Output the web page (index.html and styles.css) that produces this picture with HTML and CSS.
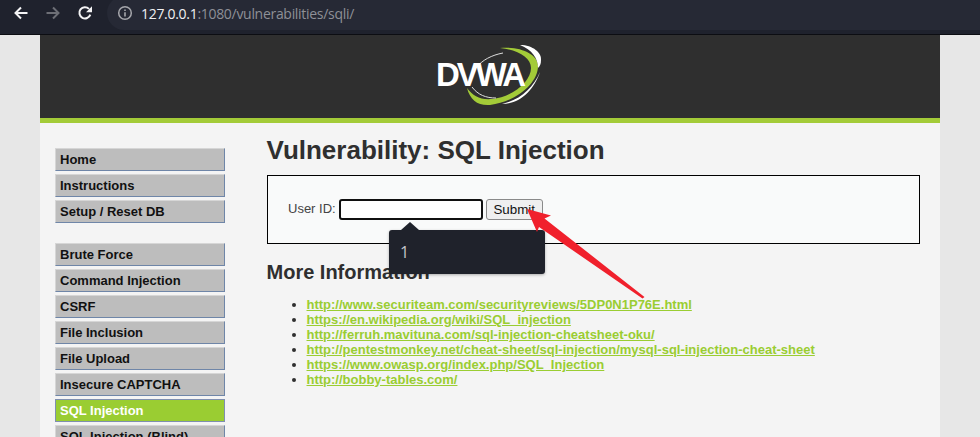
FILE: index.html
```html
<!DOCTYPE html>
<html lang="en">
<head>
  <meta charset="UTF-8">
  <title>Vulnerability: SQL Injection</title>
  <link rel="stylesheet" href="styles.css">
</head>
<body>

  <!-- Browser toolbar -->
  <div class="toolbar">
    <svg class="tool-icon" viewBox="0 0 16 16"><path d="M14.5 8H2.5M8 2.5L2.5 8L8 13.5" fill="none" stroke="#f4f4f5" stroke-width="2"/></svg>
    <svg class="tool-icon" viewBox="0 0 16 16"><path d="M1.5 8H13.5M8 2.5L13.5 8L8 13.5" fill="none" stroke="#6d6f76" stroke-width="2"/></svg>
    <svg class="tool-icon" viewBox="0 0 16 16"><path d="M13.3 9.6A5.6 5.6 0 1 1 12 3.9" fill="none" stroke="#f4f4f5" stroke-width="2"/><path d="M15 1.2V7.2H9Z" fill="#f4f4f5"/></svg>
    <div class="address">
      <svg class="info-icon" viewBox="0 0 16 16"><circle cx="8" cy="8" r="6.3" fill="none" stroke="#a6a7ac" stroke-width="1.5"/><path d="M8 7.2V11.6M8 4.4V6" stroke="#a6a7ac" stroke-width="1.6"/></svg>
      <span class="host">127.0.0.1</span><span class="path">:1080/vulnerabilities/sqli/</span>
    </div>
  </div>

  <div class="container">
    <!-- Header -->
    <div class="header">
      <svg class="logo" viewBox="0 0 120 70">
        <path d="M70 8C90 6 108 14 108 26C108 44 85 62 60 65C48 66 40 60 37 48C43 56 50 60 62 59C82 57 101 42 101 28C101 18 88 10 70 8Z" fill="#a3cb38"/>
        <path d="M90 5C103 5 112 13 111 20C111 24 110 26 108 28C108 18 102 10 90 5Z" fill="#fff"/>
        <path d="M110 32C103 48 90 60 72 64C90 64 104 50 110 32Z" fill="#fff"/>
        <path d="M73 13C62 15 52 20 46 28M42 47C48 55 56 58 66 58" fill="none" stroke="#ddd" stroke-width="1"/>
        <text class="logo-text" x="6" y="46">DVWA</text>
      </svg>
    </div>

    <div class="page">
      <!-- Side menu -->
      <div class="menu">
        <ul class="menu-group">
          <li class="menu-item">Home</li>
          <li class="menu-item">Instructions</li>
          <li class="menu-item">Setup / Reset DB</li>
        </ul>
        <ul class="menu-group">
          <li class="menu-item">Brute Force</li>
          <li class="menu-item">Command Injection</li>
          <li class="menu-item">CSRF</li>
          <li class="menu-item">File Inclusion</li>
          <li class="menu-item">File Upload</li>
          <li class="menu-item">Insecure CAPTCHA</li>
          <li class="menu-item selected">SQL Injection</li>
          <li class="menu-item">SQL Injection (Blind)</li>
        </ul>
      </div>

      <!-- Main content -->
      <div class="content">
        <h1>Vulnerability: SQL Injection</h1>
        <div class="vulnerable-box">
          <label class="user-label">User ID:</label>
          <input class="user-input" type="text">
          <button class="submit-btn">Submit</button>
        </div>
        <h2>More Information</h2>
        <ul class="links">
          <li><a href="#">http://www.securiteam.com/securityreviews/5DP0N1P76E.html</a></li>
          <li><a href="#">https://en.wikipedia.org/wiki/SQL_injection</a></li>
          <li><a href="#">http://ferruh.mavituna.com/sql-injection-cheatsheet-oku/</a></li>
          <li><a href="#">http://pentestmonkey.net/cheat-sheet/sql-injection/mysql-sql-injection-cheat-sheet</a></li>
          <li><a href="#">https://www.owasp.org/index.php/SQL_Injection</a></li>
          <li><a href="#">http://bobby-tables.com/</a></li>
        </ul>
      </div>
    </div>
  </div>

  <!-- Autocomplete popup over the form -->
  <div class="suggest">1</div>

  <!-- Red annotation arrow -->
  <svg class="annotation" viewBox="0 0 140 110">
    <path d="M12 14L36 20.5L29.5 23.5L129.5 102L127.5 103.5L24 32L22 37Z" fill="#f0202c"/>
  </svg>

</body>
</html>
```

FILE: styles.css
```css
/* Reset */
* {
  margin: 0;
  padding: 0;
  box-sizing: border-box;
}

html, body {
  height: 437px;
  overflow: hidden;
}

body {
  font-family: "Liberation Sans", Arial, sans-serif;
  background: #e7e7e7;
  color: #2f2f2f;
  position: relative;
}

/* Browser toolbar */
.toolbar {
  height: 35px;
  background: #1f222d;
  border-bottom: 1px solid #0c0d12;
  display: flex;
  align-items: center;
  padding: 0 0 8px 13px;
  gap: 16px;
}

.tool-icon {
  width: 16px;
  height: 16px;
  flex: none;
}

.address {
  height: 34px;
  margin-left: -2px;
  padding-left: 10px;
  flex: 1;
  background: #262935;
  border-radius: 17px 0 0 17px;
  display: flex;
  align-items: center;
  font-family: "Open Sans", sans-serif;
  font-size: 14px;
  letter-spacing: -0.3px;
}

.info-icon {
  width: 16px;
  height: 16px;
  margin-right: 8px;
}

.host {
  color: #f0f0f2;
}

.path {
  color: #8e9097;
}

/* Page frame */
.container {
  width: 900px;
  margin-left: 40px;
  background: #f4f4f4;
  height: 402px;
  overflow: hidden;
}

.header {
  height: 88px;
  background: #2f2f2f;
  border-bottom: 5px solid #a3cb38;
  display: flex;
  justify-content: center;
  padding-top: 5px;
}

.logo {
  width: 120px;
  height: 70px;
}

.logo-text {
  font-family: "Liberation Sans", sans-serif;
  font-weight: bold;
  font-size: 33px;
  letter-spacing: -3px;
  fill: #fff;
}

.page {
  display: flex;
  padding: 25px 20px 0 15px;
}

/* Side menu */
.menu {
  width: 170px;
  margin-right: 42px;
  flex: none;
}

.menu-group {
  list-style: none;
  margin-bottom: 20px;
}

.menu-item {
  height: 23px;
  margin-bottom: 3px;
  padding-left: 4px;
  background: #bdbdbd;
  border-top: 1px solid #d6d6d6;
  border-left: 1px solid #d6d6d6;
  border-right: 1px solid #6f86a8;
  border-bottom: 1px solid #6f86a8;
  color: #111;
  font-size: 13px;
  font-weight: bold;
  line-height: 21px;
  white-space: nowrap;
}

.menu-item.selected {
  background: #9acd32;
  color: #fff;
  border: 1px solid #7f8fb0;
}

/* Main content */
.content {
  flex: 1;
}

h1 {
  font-size: 26px;
  line-height: 30px;
  margin-top: -13px;
  margin-bottom: 10px;
  margin-left: -0.5px;
  color: #2f2f2f;
}

.vulnerable-box {
  height: 69px;
  border: 1px solid #000;
  background: #f9fafa;
  display: flex;
  align-items: center;
  padding-left: 20px;
  font-size: 13px;
  color: #444;
}

.user-label {
  margin-right: 3px;
  margin-bottom: 2px;
}

.user-input {
  width: 144px;
  height: 21px;
  background: #fff;
  border: 2px solid #101010;
  border-radius: 3px;
  outline: none;
  margin-right: 3px;
}

.submit-btn {
  width: 57px;
  height: 21px;
  background: #efefef;
  border: 1px solid #8a8a8a;
  border-radius: 3px;
  font-family: "Liberation Sans", sans-serif;
  font-size: 13.33px;
  color: #111;
}

h2 {
  font-size: 20px;
  line-height: 24px;
  margin-top: 16px;
  margin-bottom: 13px;
  margin-left: -0.5px;
  color: #2f2f2f;
}

.links {
  padding-left: 39.5px;
  font-size: 13px;
  line-height: 15px;
}

.links a {
  color: #9acd32;
  font-weight: bold;
}

/* Overlays */
.suggest {
  position: absolute;
  left: 389px;
  top: 230px;
  width: 156px;
  height: 44px;
  background: #1f222b;
  border-radius: 3px;
  box-shadow: 0 1px 3px rgba(0, 0, 0, 0.3);
  color: #c4c5c9;
  font-family: "Open Sans", sans-serif;
  font-size: 16px;
  padding: 11px 0 0 11px;
}

.suggest::before {
  content: "";
  position: absolute;
  left: 12px;
  top: -8px;
  border-left: 9px solid transparent;
  border-right: 9px solid transparent;
  border-bottom: 8px solid #1f222b;
}

.annotation {
  position: absolute;
  left: 515px;
  top: 195px;
  width: 140px;
  height: 110px;
  overflow: visible;
}
```
